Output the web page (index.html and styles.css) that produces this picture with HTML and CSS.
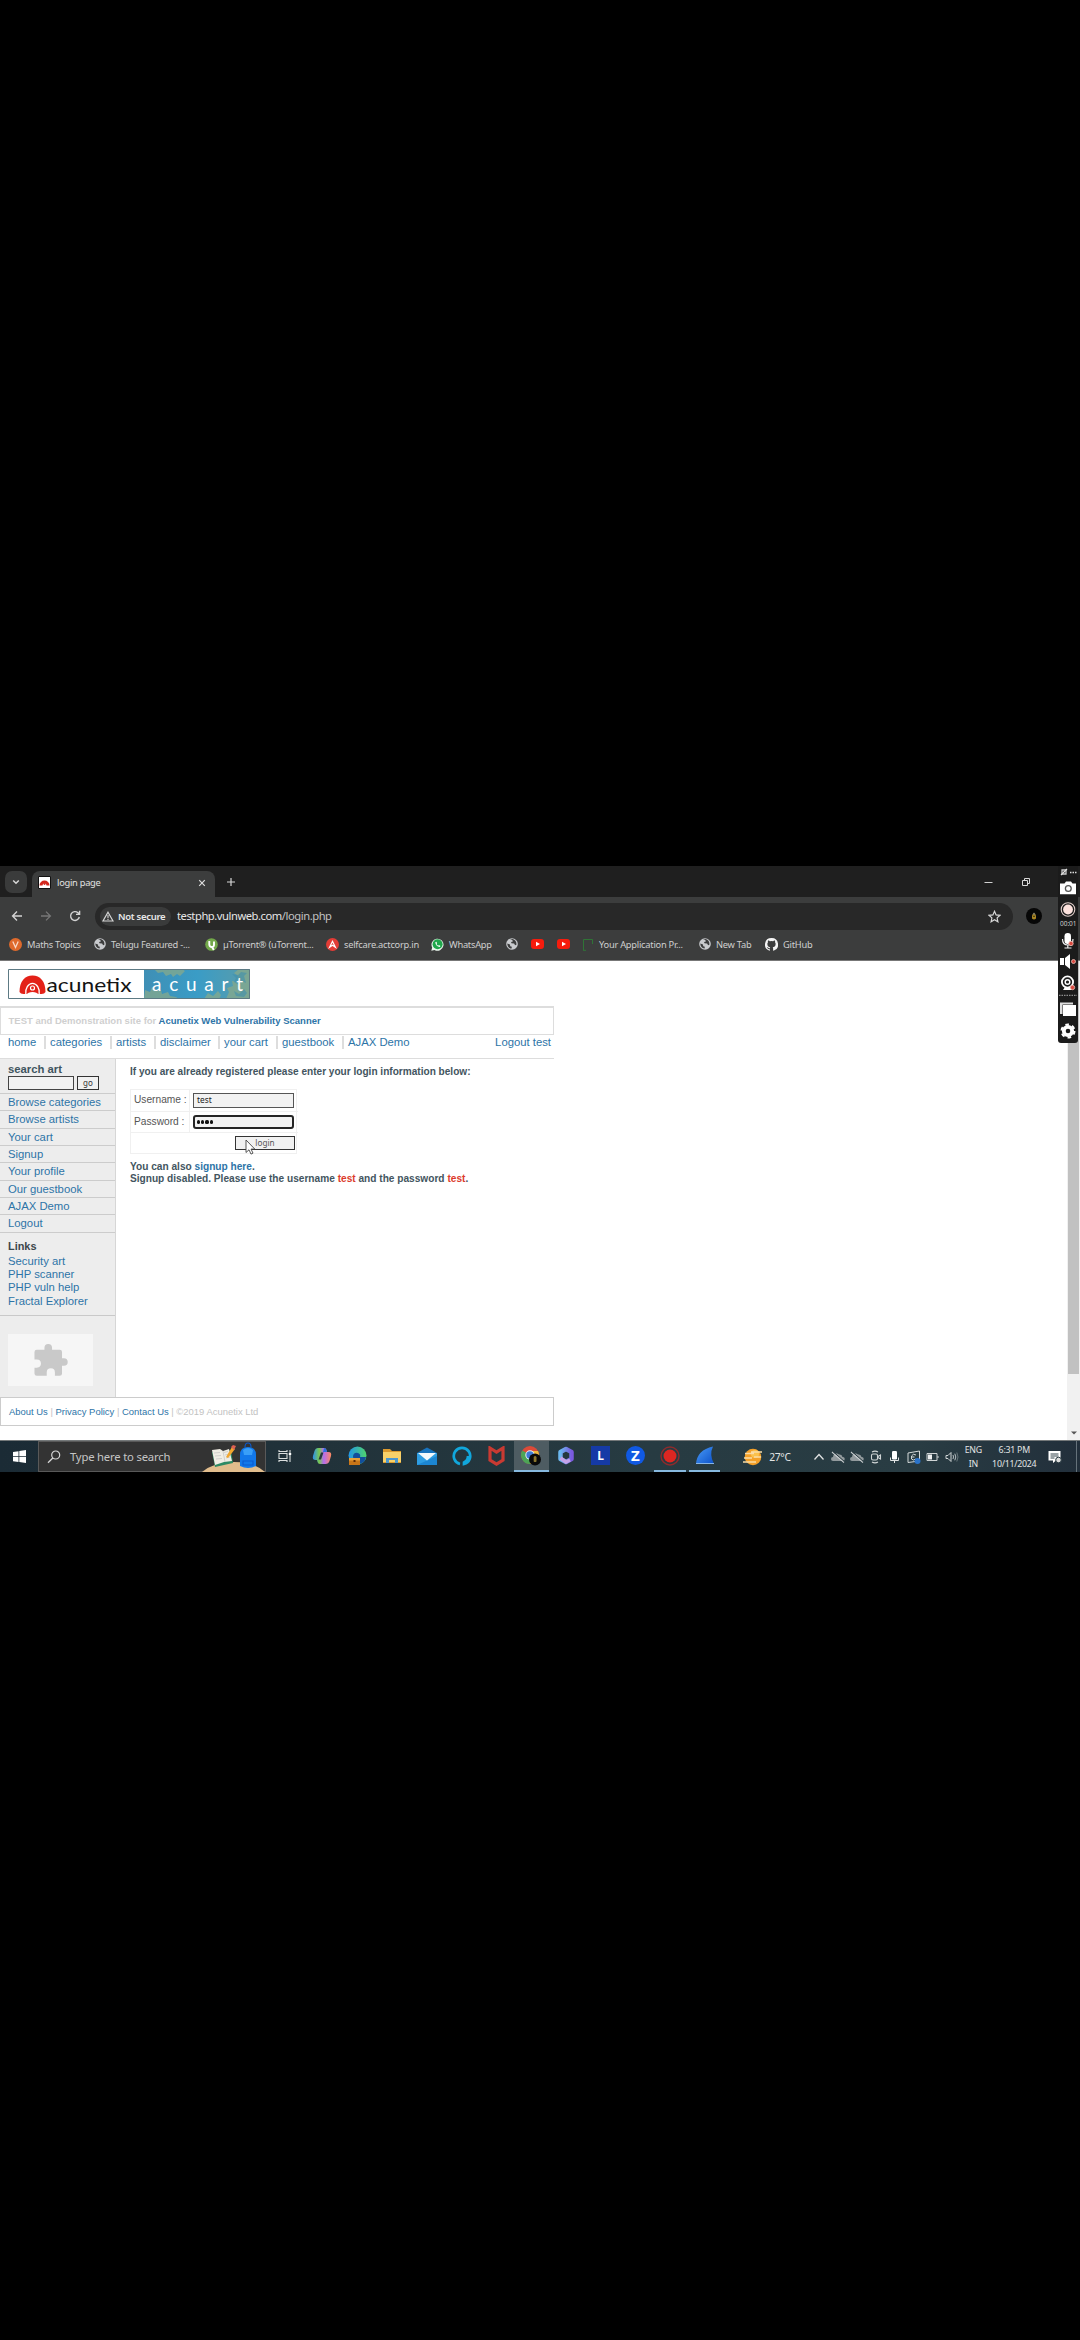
FILE: index.html
```html
<!DOCTYPE html>
<html lang="en">
<head>
<meta charset="utf-8">
<title>login page</title>
<link rel="stylesheet" href="styles.css">
</head>
<body>
<svg width="0" height="0" class="defs">
  <defs>
    <linearGradient id="sky" x1="0" x2="1"><stop offset="0" stop-color="#3f8fb5"/><stop offset=".5" stop-color="#3a9cc6"/><stop offset="1" stop-color="#5a9caa"/></linearGradient>
    <linearGradient id="cop" x1="0" x2="1"><stop offset="0" stop-color="#2b8ff0"/><stop offset=".35" stop-color="#79c94e"/><stop offset=".6" stop-color="#b56cf0"/><stop offset="1" stop-color="#ff8a5c"/></linearGradient>
    <linearGradient id="m365" x1="0" x2="1"><stop offset="0" stop-color="#6bb8f0"/><stop offset="1" stop-color="#7a5ae0"/></linearGradient>
    <linearGradient id="fin" x1="0" x2="1" y2="1"><stop offset="0" stop-color="#4a9cf8"/><stop offset="1" stop-color="#0b50c8"/></linearGradient>
    <linearGradient id="edge" x1="0" x2="1"><stop offset="0" stop-color="#2196e8"/><stop offset="1" stop-color="#4fd46c"/></linearGradient>
    <symbol id="globe" viewBox="0 0 12 12"><circle cx="6" cy="6" r="5.8" fill="#c9cbce"/><path d="M1.3 5.6 4 6.4l.2 1.8 1.6.5-.2 1.8C3.200 10.600 1.300 8.600 1.300 5.600ZM4 1.800l2.300.2.600 1.400-1.800.6.300 1.300 2.700.200 1 1.800 1.300-.600c.400-2.700-1.200-4.900-3.800-5.600Z" fill="#3c3d3d"/></symbol>
    <symbol id="yt" viewBox="0 0 13 10"><rect width="13" height="10" rx="3" fill="#f61c0d"/><path d="M5 2.800v4.400L9 5z" fill="#fff"/></symbol>
    <symbol id="cloudoff" viewBox="0 0 14 12"><path d="M2 10a2 2 0 0 1 0-4 3.500 3.500 0 0 1 6-2.500A3 3 0 0 1 11.500 6 2 2 0 0 1 12 10Z" fill="#929a9d"/><path d="m1 1 12 10.500" stroke="#c9ced0" stroke-width="1.100"/><path d="m2.200.7 11 9.600" stroke="#26383f" stroke-width="1"/></symbol>
  </defs>
</svg>

<main class="desktop">
  <section class="browser">
    <div class="tabstrip">
      <div class="tabsearch"><svg width="10" height="10" viewBox="0 0 10 10"><path d="m2.200 3.500 2.800 2.800 2.800-2.800" fill="none" stroke="#d8d8d8" stroke-width="1.500"/></svg></div>
      <div class="tab">
        <svg width="13" height="13" viewBox="0 0 13 13"><path fill="#fff" stroke="#111" d="M.5.5h12v12H.5z"/><path d="M1.500 9.500a5 5 0 0 1 10 0H8.500a2 2 0 0 0-4 0Z" fill="#d3261c"/><circle cx="6.500" cy="8" r="1" fill="#d3261c"/></svg>
        <span class="t-tab">login page</span>
        <svg class="close" width="8" height="8" viewBox="0 0 8 8"><path d="m1.200 1.200 5.600 5.600m0-5.600L1.200 6.800" stroke="#dedede" stroke-width="1.200"/></svg>
      </div>
      <svg class="plus" width="10" height="10" viewBox="0 0 10 10"><path d="M5 1v8M1 5h8" stroke="#d5d5d5" stroke-width="1.200"/></svg>
      <div class="winbtns">
        <svg width="9" height="9" viewBox="0 0 9 9"><path d="M.5 5.500h8" stroke="#d0d0d0"/></svg>
        <svg width="10" height="10" viewBox="0 0 10 10"><path d="M1.500 3.500h5v5h-5zM3.500 3.300V1.500h5v5H6.700" fill="none" stroke="#d8d8d8"/></svg>
      </div>
    </div>
    <div class="toolbar">
      <div class="navbtns">
        <svg width="12" height="12" viewBox="0 0 12 12"><path d="M11 6H2M6 1.600 1.600 6 6 10.400" fill="none" stroke="#d3d3d3" stroke-width="1.400"/></svg>
        <svg width="12" height="12" viewBox="0 0 12 12"><path d="M1 6h9M6 1.600 10.400 6 6 10.400" fill="none" stroke="#777" stroke-width="1.300"/></svg>
        <svg width="12" height="12" viewBox="0 0 12 12"><path d="M10.300 7A4.400 4.400 0 1 1 9 2.800l1.400 1.400M10.600.8v3.600H7" fill="none" stroke="#d3d3d3" stroke-width="1.400"/></svg>
      </div>
      <div class="omnibox">
        <div class="chip"><svg width="12" height="11" viewBox="0 0 12 11"><path d="M6 1.200 11 10H1Z" fill="none" stroke="#d6d6d6" stroke-width="1.200"/><path d="M6 4v3M6 7.800v1.100" stroke="#d6d6d6" stroke-width="1.100"/></svg><span class="t-chip">Not secure</span></div>
        <span class="t-url">testphp.vulnweb.com<i>/login.php</i></span>
        <svg class="star" width="13" height="13" viewBox="0 0 13 13"><path d="m6.500 1.300 1.600 3.600 3.900.4-2.900 2.600.8 3.900-3.400-2-3.400 2 .8-3.900L1 5.300l3.900-.4Z" fill="none" stroke="#d8d8d8" stroke-width="1.200"/></svg>
      </div>
      <svg class="avatar" width="16" height="16" viewBox="0 0 16 16"><circle cx="8" cy="8" r="8" fill="#070707"/><path d="M6 8a2 2 0 0 1 4 0v2.500q-2 2-4 0Z" fill="#a98522"/><path d="M6.300 6.500 8 4.500l1.700 2Z" fill="#928d75"/><path d="M7 8.300h2" stroke="#373417"/></svg>
    </div>
    <div class="bookmarks">
      <a class="bm b1"><svg width="13" height="13" viewBox="0 0 13 13"><circle cx="6.500" cy="6.500" r="6.500" fill="#df6a2c"/><path d="m3.800 3.500 2.700 6 2.700-6" fill="none" stroke="#f8d9c8" stroke-width="1.300"/></svg><span>Maths Topics</span></a>
      <a class="bm b2"><svg width="12" height="12"><use href="#globe"/></svg><span>Telugu Featured -...</span></a>
      <a class="bm b3"><svg width="13" height="13" viewBox="0 0 13 13"><circle cx="6.500" cy="6.500" r="6.300" fill="#72a84a"/><path d="M4.300 3v3.500q.2 2.500 2.500 2.500t2.200-2.500V3.500M7 9l1.800 3" fill="none" stroke="#fff" stroke-width="1.900"/></svg><span>µTorrent® (uTorrent...</span></a>
      <a class="bm b4"><svg width="13" height="13" viewBox="0 0 13 13"><circle cx="6.500" cy="6.500" r="6.500" fill="#e23c36"/><path d="m3.600 9.300 2.900-6 2.900 6-2.900-2Z" fill="none" stroke="#fff" stroke-width="1.200"/></svg><span>selfcare.actcorp.in</span></a>
      <a class="bm b5"><svg width="13" height="13" viewBox="0 0 13 13"><path d="M.3 12.700 1.200 9.500A6 6 0 1 1 3.500 11.900Z" fill="#e9f6ec"/><circle cx="6.600" cy="6.300" r="5" fill="#1fa74b"/><path d="M4.300 4.200q.3 4 4.600 4.700l.5-1-1.500-.8-.6.600Q6 7 5.500 5.900l.6-.6-.7-1.500Z" fill="#fff"/></svg><span>WhatsApp</span></a>
      <a class="bm b6"><svg width="12" height="12"><use href="#globe"/></svg></a>
      <a class="bm b7"><svg width="13" height="10"><use href="#yt"/></svg></a>
      <a class="bm b8"><svg width="13" height="10"><use href="#yt"/></svg></a>
      <a class="bm b9"><svg width="12" height="13" viewBox="0 0 12 13"><path d="M1.500 12V1.500h9V6M1 12.300h3" fill="none" stroke="#2f7436"/></svg><span>Your Application Pr...</span></a>
      <a class="bm b10"><svg width="12" height="12"><use href="#globe"/></svg><span>New Tab</span></a>
      <a class="bm b11"><svg width="13" height="13" viewBox="0 0 16 16"><path fill="#f4f4f4" d="M8 0a8 8 0 0 0-2.500 15.600c.4.100.5-.2.500-.4v-1.500c-2.200.5-2.700-1-2.700-1-.400-.900-.900-1.200-.900-1.200-.700-.500.1-.5.1-.5.800.100 1.200.800 1.200.800.700 1.200 1.900.900 2.300.700.100-.500.300-.900.500-1.100C4.700 11.200 2.900 10.500 2.900 7.500c0-.900.300-1.600.800-2.200-.100-.2-.400-1 .1-2.100 0 0 .7-.2 2.200.8a7.500 7.500 0 0 1 4 0c1.500-1 2.200-.8 2.200-.8.400 1.100.200 1.900.100 2.100.5.600.8 1.300.8 2.200 0 3-1.900 3.700-3.600 3.900.300.200.5.700.5 1.500v2.300c0 .2.100.5.600.4A8 8 0 0 0 8 0Z"/></svg><span>GitHub</span></a>
    </div>

    <div class="viewport">
      <div class="site">
        <svg class="logo" width="242" height="30" viewBox="0 0 242 30">
          <rect x=".5" y=".5" width="241" height="29" fill="#fff"/>
          <path d="M136 0h106v30H136z" fill="url(#sky)"/>
          <g fill="#86aa8c" opacity=".75"><path d="m136 30 1-9 5 2 2-5 4 4 5-1 1 4 6-2 2 4 6 1 3 2Zm82 0 3-7-2-4 6-2-1-5 5 1 1-6-4-3 5-4h11v30Z"/><path d="m146 0 4 4 5-1 3 4 5-2 2 3 4-3 3 2 5-5-3-2ZM196 30l4-6 5 3 5-5 3 4-2 4Z"/></g>
          <g fill="#3f90ae" opacity=".6"><path d="m224 5 4 4-2 4 5 3 3-4 4 2-2-7 3-3-6-1-3 3ZM226 22l5 3 5-5 3 4-3 4-8-1Z"/></g>
          <path d="M11.500 23C11.500 12 17 6.500 24.500 6.500S37.500 12 37.500 23q-1 2-4 2H15.500q-3 0-4-2Z" fill="#e32118"/>
          <path d="M17.800 25a6.800 9 0 1 1 13.400 0" fill="none" stroke="#fff" stroke-width="1.300"/>
          <circle cx="24.500" cy="19" r="2" fill="none" stroke="#fff" stroke-width="1.200"/>
          <path d="M18.500 25.500q1.500-2.500 6-2.500t6 2.500Z" fill="#fff"/>
          <text x="38.500" y="22.500" textLength="85" lengthAdjust="spacingAndGlyphs" class="lg1">acunetix</text>
          <text x="144" y="22" textLength="91" class="lg2">acuart</text>
          <path d="M.5.500h241v29H.5z" fill="none" stroke="#5d7a84"/>
        </svg>
        <header class="banner"><span class="t-demo">TEST and Demonstration site for</span> <a class="t-scan">Acunetix Web Vulnerability Scanner</a></header>
        <nav class="nav">
          <a class="n1">home</a><a class="n2">categories</a><a class="n3">artists</a><a class="n4">disclaimer</a><a class="n5">your cart</a><a class="n6">guestbook</a><a class="n7">AJAX Demo</a><a class="n8">Logout test</a>
        </nav>
        <div class="cols">
          <aside class="side">
            <div class="search"><b class="t-search">search art</b><div class="srow"><i class="field"></i><i class="go">go</i></div></div>
            <a class="item">Browse categories</a><a class="item">Browse artists</a><a class="item">Your cart</a><a class="item">Signup</a><a class="item">Your profile</a><a class="item">Our guestbook</a><a class="item">AJAX Demo</a><a class="item">Logout</a>
            <div class="links"><b>Links</b><a>Security art</a><a>PHP scanner</a><a>PHP vuln help</a><a>Fractal Explorer</a></div>
            <div class="plugin"><svg width="34" height="34" viewBox="0 0 34 34"><path d="M3 7h8V5a4 4 0 0 1 8 0v2h8q2.500 0 2.500 2.500V16h2a4 4 0 0 1 0 8h-2v8q0 2.500-2.500 2.500h-5V31a4.300 4.300 0 0 0-8.600 0v3.500H3Q.500 34.500.500 32v-6H3a4.300 4.300 0 0 0 0-8.600H.500V9.500Q.500 7 3 7Z" transform="scale(.95)" fill="#c9c9c9"/></svg></div>
          </aside>
          <section class="content">
            <h3>If you are already registered please enter your login information below:</h3>
            <div class="form">
              <label>Username :</label><div class="cell"><i class="inp">test</i></div>
              <label>Password :</label><div class="cell"><i class="inp pw"><em></em><em></em><em></em><em></em></i></div>
              <div class="last"><i class="btn">login</i><svg class="cursor" width="11" height="16" viewBox="0 0 11 16"><path d="M1 1v12.500l3-2.700 2 4.300 2-1-2-4h3.800Z" fill="#fff" stroke="#444" stroke-width=".9"/></svg></div>
            </div>
            <p><span class="t-also">You can also <a>signup here</a>.</span><br><span class="t-dis">Signup disabled. Please use the username <em>test</em> and the password <em>test</em>.</span></p>
          </section>
        </div>
        <footer class="foot"><a>About Us</a> | <a>Privacy Policy</a> | <a>Contact Us</a> | ©2019 Acunetix Ltd</footer>
      </div>
      <div class="scroll"><div class="thumb"></div><svg width="6" height="4" viewBox="0 0 6 4"><path d="M0 .5h6L3 3.500Z" fill="#555"/></svg></div>
    </div>

    <div class="recorder">
      <svg width="20" height="177" viewBox="0 0 20 177">
        <path d="M4 4h4v4H4z" fill="none" stroke="#ccc" stroke-width="1.300"/><path d="m3 9 6-6M12 6.500h1.500m1 0H16m1 0h1.500" stroke="#ddd" stroke-width="1.300"/>
        <path d="M2 17.500h4.500L8 15.500h5l1.500 2H18v10.700H2Z" fill="#fff"/><circle cx="10.300" cy="22.500" r="2.900" fill="#fff" stroke="#555" stroke-width="1.300"/>
        <circle cx="10" cy="43.500" r="6.800" fill="none" stroke="#dfccc8" stroke-width="1.100"/><circle cx="10" cy="43.500" r="4.900" fill="#fde2dd"/>
        <text x="2" y="59.500" textLength="16.500" class="rectime">00:01</text>
        <rect x="6.500" y="67" width="6.500" height="11" rx="3.200" fill="#fff"/><path d="M4.500 73q0 6 5.300 6t5.200-6M9.800 79v3M6.500 82h7" fill="none" stroke="#eee" stroke-width="1.200"/>
        <path d="M2 92h4v7H2zm5 0 5-4v15l-5-4Z" fill="#fff"/>
        <circle cx="9.500" cy="116" r="5.600" fill="none" stroke="#fff" stroke-width="1.800"/><circle cx="9.500" cy="116" r="2.300" fill="none" stroke="#fff" stroke-width="1.500"/><path d="m7 121-2 3h9l-2-3Z" fill="#fff"/>
        <g fill="#d9483f" stroke="#eec1b9" stroke-width=".8"><circle cx="13" cy="77.500" r="2.200"/><circle cx="15.500" cy="95.500" r="2"/><circle cx="14.500" cy="121.500" r="2.200"/></g>
        <path d="M1 129.300h18" stroke="#aaa" stroke-dasharray="1.500 1"/>
        <path d="M2 136.500h13v2H4.500V148H2z" fill="#ddd"/><path d="M5 139h13v11H5z" fill="#fff"/>
        <circle cx="10" cy="165" r="4.200" fill="none" stroke="#fff" stroke-width="3.800"/><circle cx="10" cy="165" r="6.500" fill="none" stroke="#fff" stroke-width="2" stroke-dasharray="3.600 3.200"/>
      </svg>
    </div>
  </section>

  <section class="taskbar">
    <div class="start"><svg width="13" height="13" viewBox="0 0 13 13"><path d="M0 2l5.500-.8v5H0Zm6.300-1L13 0v6.200H6.300ZM0 7h5.500v5L0 11.200Zm6.300 0H13v6l-6.700-.9Z" fill="#fff"/></svg></div>
    <div class="tsearch">
      <svg width="14" height="14" viewBox="0 0 14 14"><circle cx="8.700" cy="5" r="4" fill="none" stroke="#d6d6d6" stroke-width="1.200"/><path d="M5.800 8 1 12.800" stroke="#d6d6d6" stroke-width="1.300"/></svg>
      <span class="t-type">Type here to search</span>
      <svg class="school" width="63" height="30" viewBox="0 0 63 30"><path d="M0 30Q12 20 32 20t31 10Z" fill="#e1bd8d"/><path d="m10 10 9-1 4 .5 6-1.500 2 13-18 4Z" fill="#2d8a63"/><path d="m10 8 8-1 3 2 6-2 3 12-8 1-9 3Z" fill="#f0ede4"/><path d="m12 11 6-.5m4 0 4-1M13 14l6-.5m4-.5 4-1M14 17l6-.5m4-.5 4-1M21 9l2 11" stroke="#bbb" stroke-width=".6"/><path d="m24 15 6-10 3 2-7 9Z" fill="#f2a62d"/><path d="m29 5 2-2 3 1-2 4Z" fill="#dd6152"/><path d="M38 24V13q0-8 8-8t8 8v11q-8 4-16 0Z" fill="#1278ea"/><path d="M43 5q0-4 3-4t3 4M41 19h10v4H41Z" stroke="#0a5ad0" fill="none" stroke-width="1.100"/><path d="M41 8q5-4 10 0l-1 5h-8Z" fill="#399ff8"/></svg>
    </div>
    <div class="apps">
      <div class="app tv"><svg width="14" height="14" viewBox="0 0 14 14"><path d="M1 1v1.500h8V1M1 13v-1.500h8V13M1 4.500h8v5H1zM12 1v12" fill="none" stroke="#d9dddd" stroke-width="1.100"/><path d="M10.800 4h2.400v2h-2.400z" fill="#fff"/></svg></div>
      <div class="app cp"><svg width="20" height="18" viewBox="0 0 20 18"><path d="M6 1h6q2 0 2.500 2l.5 2h1.500q3.500 0 2.500 4l-1.500 5q-1 3-4 3H8q-2 0-2.500-2L5 13H3.500Q0 13 1 9l1.500-5q1-3 3.500-3Z" fill="url(#cop)"/><path d="M11.500 5.500 9 12.500H6.500L9 5.500Z" fill="#26383f"/><path d="M12 1q2 0 2.500 2l.5 2h-4Z" fill="#2b6fe0"/></svg></div>
      <div class="app"><svg width="20" height="20" viewBox="0 0 20 20"><circle cx="10.500" cy="9.500" r="9" fill="url(#edge)"/><path d="M6 10q1-4 5-3 3 1 2 4h6q-1 7-8 7-5-2-5-8Z" fill="#124f9c"/><path d="M2 12h11v7H2z" fill="#c97618"/><path d="M2 12h11v2.500H2z" fill="#e6a13a"/><path d="M6.500 14h2v2h-2z" fill="#5c2b08"/></svg></div>
      <div class="app"><svg width="18" height="16" viewBox="0 0 18 16"><path d="M0 1h7l2 2h9v12H0Z" fill="#dc9a2e"/><path d="M0 4h18v10H0Z" fill="#f8d169"/><path d="M3 15v-5h12v5h-3v-3H6v3Z" fill="#4c97cf"/></svg></div>
      <div class="app"><svg width="20" height="18" viewBox="0 0 20 18"><path d="m0 6 10-5.500L20 6v12H0Z" fill="#1873bd"/><path d="M0 6h20v12H0Z" fill="#2e9de2"/><path d="m0 18 20-9v9Z" fill="#1c86d2"/><path d="M1 6h18l-9 7.500Z" fill="#f3f9fc"/></svg></div>
      <div class="app"><svg width="20" height="20" viewBox="0 0 20 20"><path d="M8 18a8.200 8.200 0 1 1 4 0v-1.500q4-2 4-6.500" fill="none" stroke="#11a7dc" stroke-width="2.700"/></svg></div>
      <div class="app"><svg width="17" height="20" viewBox="0 0 17 20"><path d="m2 2 6.500 4L15 2v12l-6.500 4L2 14Z" fill="none" stroke="#c93a32" stroke-width="3.200"/></svg></div>
      <div class="app active"><svg width="22" height="21" viewBox="0 0 22 21"><circle cx="10" cy="10" r="9" fill="#dc4a38"/><path d="M2.200 5.500A9 9 0 0 0 10 19l4-7Z" fill="#4da557"/><path d="M10 19a9 9 0 0 0 8-13h-8Z" fill="#edb93b"/><circle cx="10" cy="10" r="4.700" fill="#e9f0f8"/><circle cx="10" cy="10" r="3.700" fill="#3e79d4"/><circle cx="15" cy="14.500" r="6" fill="#090909"/><path d="M13.700 12q1.400-2 2.800 0v4.500q-1.400 1-2.800 0Z" fill="#8a752d"/></svg></div>
      <div class="app"><svg width="18" height="19" viewBox="0 0 18 19"><path d="M9 3 14.500 6v7L9 16l-5.500-3V6Z" fill="none" stroke="url(#m365)" stroke-width="4.500" stroke-linejoin="round"/><path d="M3.500 12 9 16l4-2" stroke="#c5a2e8" stroke-width="3.500" fill="none"/></svg></div>
      <div class="app"><span class="sq">L</span></div>
      <div class="app"><span class="sq zed">Z</span></div>
      <div class="app run"><svg width="20" height="20" viewBox="0 0 20 20"><circle cx="10" cy="10" r="9" fill="none" stroke="#8e2b2c" stroke-width="1.400"/><circle cx="10" cy="10" r="6.500" fill="#dc2722"/></svg></div>
      <div class="app run"><svg width="19" height="19" viewBox="0 0 19 19"><path d="M1 18Q2 4 18 .5q-4 8 1 17.500Z" fill="url(#fin)"/><path d="M1 17.500h18" stroke="#86b5e5"/></svg></div>
    </div>
    <div class="weather"><svg width="20" height="18" viewBox="0 0 20 18"><circle cx="10" cy="9" r="8.300" fill="#f4a028"/><circle cx="12" cy="6" r="4" fill="#fbc14c"/><path d="M2 5.500h9M8 4h11M1 10h8M11 9h7M0 14h13" stroke="#fadba4" stroke-width="1.300"/></svg><span class="t-temp">27°C</span></div>
    <div class="tray">
      <svg width="12" height="12" viewBox="0 0 12 12"><path d="m1.500 8.500 4.500-5 4.500 5" fill="none" stroke="#e0e2e2" stroke-width="1.300"/></svg>
      <svg width="14" height="12"><use href="#cloudoff"/></svg>
      <svg width="14" height="12"><use href="#cloudoff"/></svg>
      <svg width="12" height="14" viewBox="0 0 12 14"><rect x="1.500" y="4" width="6" height="6" rx="1.500" fill="none" stroke="#d0d5d6" stroke-width="1.100"/><path d="m8 6.500 2.500-1.500v4L8 7.500M2 2q3-1.800 6 0M2 12q3 1.800 6 0" fill="none" stroke="#d0d5d6" stroke-width="1.100"/></svg>
      <svg width="11" height="14" viewBox="0 0 11 14"><rect x="3" y="1" width="5" height="8.500" rx="1.200" fill="#fff"/><path d="M1.500 7.500v3h8v-3M5.500 10.500V13" fill="none" stroke="#dfe2e2"/></svg>
      <svg width="14" height="14" viewBox="0 0 14 14"><path d="m1 3 11.500-2v10L1 12.500Z" fill="none" stroke="#d3d8d9"/><path d="M9 5Q6 3 4.500 6v3q2 2 4 0M4.500 7h3" fill="none" stroke="#d3d8d9"/><circle cx="10.500" cy="11" r="3" fill="#2b73c9"/></svg>
      <svg width="13" height="10" viewBox="0 0 13 10"><path d="M1 1.500h10v7H1zM12 4v2" fill="none" stroke="#cfd4d5"/><path d="M2 2.500h4v5H2z" fill="#eef0f0"/></svg>
      <svg width="14" height="12" viewBox="0 0 14 12"><path d="M1 4.500h2l3-3v9l-3-3H1Z" fill="none" stroke="#cfd4d5"/><path d="M8 4q1 2 0 4M9.800 2.700q2 3.300 0 6.600" fill="none" stroke="#b9c0c2"/><path d="M11.800 1.500q2.400 4.500 0 9" fill="none" stroke="#68767b"/></svg>
    </div>
    <div class="lang"><span>ENG</span><span>IN</span></div>
    <div class="clock"><span class="t-time">6:31 PM</span><span class="t-date">10/11/2024</span></div>
    <svg class="notif" width="14" height="14" viewBox="0 0 14 14"><path d="M.5 1h12v9.500H8L5 13v-2.500H.5Z" fill="#fff"/><path d="M2.500 4h8M2.500 6h8M2.500 8h4" stroke="#34454c"/><circle cx="10.500" cy="10" r="2.800" fill="#ddd" stroke="#26383f"/></svg>
    <div class="peek"></div>
  </section>
</main>
</body>
</html>
```
FILE: styles.css
```css
* { box-sizing: border-box; }
html, body { margin: 0; background: #000; }
body { width: 1080px; height: 2340px; overflow: hidden; font-family: "Liberation Sans", Arial, sans-serif; }
i, em { font-style: normal; }
svg { display: block; flex: none; }
span, a, b, label, h3 { white-space: nowrap; }
.defs { position: absolute; }
.desktop { padding-top: 866px; }
.browser { position: relative; height: 574px; font-family: "Noto Sans", sans-serif; }

.tabstrip { display: flex; height: 31px; background: #1f1f1f; padding: 5px 0 0 5px; }
.tabsearch { width: 22px; height: 22px; border-radius: 7px; background: #3a3b3b; display: grid; place-items: center; }
.tab { margin-left: 5px; width: 183px; height: 26px; background: #3c3d3d; border-radius: 8px 8px 0 0; display: flex; align-items: center; padding: 0 9px 3px 6px; }
.t-tab { margin-left: 6px; font-size: 9.300px; letter-spacing: -.27px; color: #e2e2e2; }
.close { margin-left: auto; }
.plus { margin: 6px 0 0 11px; }
.winbtns { margin-left: auto; display: flex; width: 96px; gap: 27.500px; padding-top: 6px; }

.toolbar { display: flex; align-items: center; height: 37px; background: #3c3d3d; }
.navbtns { display: flex; gap: 17px; padding-left: 11px; width: 95px; }
.omnibox { display: flex; align-items: center; width: 918px; height: 27px; border-radius: 14px; background: #282828; padding: 0 12px 0 5px; margin-top: 1px; }
.chip { display: flex; align-items: center; gap: 4px; width: 71px; height: 19px; border-radius: 10px; background: #3a3b3b; padding-left: 2px; }
.t-chip { font-size: 9.500px; font-weight: 600; letter-spacing: -.3px; color: #e8e8e8; }
.t-url { margin-left: 6px; padding-bottom: 1px; font-size: 11.200px; letter-spacing: -.45px; color: #e6e6e6; }
.t-url i { color: #c2c2c2; }
.star { margin-left: auto; }
.avatar { margin-left: 13px; }

.bookmarks { display: flex; height: 27px; background: #3c3d3d; border-bottom: 1px solid #777; padding: 0 0 6px 9px; font-size: 9.300px; letter-spacing: -.25px; color: #cfcfcf; }
.bm { display: flex; align-items: center; gap: 5px; }
.b1 { width: 85px; } .b2 { width: 111px; } .b3 { width: 121px; } .b4 { width: 105px; } .b5 { width: 75px; }
.b6 { width: 25px; } .b7 { width: 26px; } .b8 { width: 25px; } .b9 { width: 117px; } .b10 { width: 66px; }

.viewport { display: flex; height: 479px; background: #fff; font-family: "Liberation Sans", Arial, sans-serif; }
.site { width: 554px; }
.logo { margin: 8px 0 7px 8px; }
.lg1 { font: 20px "Lato", sans-serif; fill: #141414; }
.lg2 { font: 19px "Lato", sans-serif; fill: #fff; }
.banner { height: 29px; border: 1px solid #ddd; border-width: 2px 1px 1px 1px; padding-left: 7.500px; font-size: 9.500px; line-height: 26px; font-weight: bold; color: #cfcfcf; white-space: nowrap; }
a { color: #2d74a7; }
.bm { color: inherit; }
.nav { display: flex; height: 24px; border-bottom: 1px solid #ddd; padding: 1px 3px 0 8px; font-size: 11.300px; line-height: 13px; }
.nav a { height: 13px; border-right: 2px solid #ddd; margin-right: 4px; }
.nav .n7 { border: 0; }
.nav .n8 { border: 0; margin: 0 0 0 auto; }
.n1 { width: 38px; } .n2 { width: 62px; } .n3 { width: 40px; } .n4 { width: 60px; } .n5 { width: 54px; } .n6 { width: 62px; }
.cols { display: flex; height: 338px; }
.side { width: 116px; background: #ededed; border-right: 1px solid #d6d6d6; }
.search { height: 35px; border-bottom: 1px solid #ccc; padding: 4px 0 0 8px; }
.t-search { display: block; font-size: 11.300px; line-height: 13px; color: #405560; }
.srow { display: flex; gap: 3px; }
.field { width: 66px; height: 14px; background: #f2f2f2; border: 1.500px solid #444; }
.go { width: 22px; height: 14px; border: 1.500px solid #333; background: #f1f1f1; font: 8px/12px "Noto Sans", sans-serif; text-align: center; color: #333; }
.item { display: block; height: 17.350px; border-bottom: 1px solid #ccc; padding-left: 8px; font-size: 11.300px; line-height: 17.500px; }
.links { height: 83px; border-bottom: 1px solid #c9c9c9; padding: 6px 0 0 8px; font-size: 11.300px; line-height: 13.300px; }
.links b, .links a { display: block; }
.links b { color: #3c464b; line-height: 15px; margin-bottom: 1px; font-size: 10.900px; }
.plugin { width: 85px; height: 52px; margin: 18px 0 0 8px; background: #f6f6f6; display: grid; place-items: center; }
.content { padding: 5px 0 0 14px; color: #435560; }
h3 { margin: 0 0 10px; font-size: 10.080px; line-height: 15px; }
.form { display: grid; grid-template-columns: 59px 108px; grid-template-rows: 22px 21px 20px; width: 167px; height: 65px; border: 1px solid #f0f0f0; color: #555; position: relative; }
label { padding-left: 3px; font-size: 10.200px; line-height: 20px; border-right: 1px solid #f0f0f0; border-bottom: 1px solid #f0f0f0; }
.cell { padding: 3px 0 0 3px; border-bottom: 1px solid #f0f0f0; }
.inp { display: flex; width: 101px; height: 15px; border: 1.500px solid #555; background: #f2f2f2; font: 8.300px/12px "Noto Sans", sans-serif; color: #222; padding-left: 3px; }
.pw { border: 2px solid #252525; border-radius: 3px; align-items: center; gap: 1px; padding-left: 2px; height: 14px; }
.pw em { width: 3.200px; height: 3.200px; border-radius: 50%; background: #111; }
.last { grid-column: 1 / 3; position: relative; padding: 3px 0 0 104px; }
.btn { display: block; width: 60px; height: 14px; border: 1.500px solid #333; background: #f1f1f1; font: 8.200px/11px "Noto Sans", sans-serif; text-align: center; color: #555; }
.cursor { position: absolute; left: 114px; top: 6px; }
p { margin: 7px 0 0; font-weight: bold; font-size: 10.130px; line-height: 12px; }
p em { color: #dc3b2d; }
.foot { height: 29px; border: 1px solid #ccc; padding-left: 8px; font-size: 9.450px; line-height: 27px; color: #c2c2c2; white-space: nowrap; }
.scroll { margin-left: auto; width: 13px; background: #f1f1f1; display: flex; flex-direction: column; align-items: center; }
.thumb { width: 11px; height: 413px; background: #c1c1c1; }
.scroll svg { margin-top: 57px; }
.recorder { position: absolute; left: 1058px; top: 0; width: 20px; height: 177px; background: #1b1b1b; border-radius: 0 0 3px 3px; }
.rectime { font: 6.500px "Noto Sans", sans-serif; fill: #ccc; }

.taskbar { display: flex; align-items: center; height: 32px; background: linear-gradient(90deg, #1b2b35 0, #21323a 30%, #273b42 60%, #293c43 85%, #222f3b); border-top: 1px solid #75797a; font-family: "Noto Sans", sans-serif; color: #e3e5e5; }
.start { width: 38px; display: grid; place-items: center; }
.tsearch { width: 228px; height: 31px; background: #333; border: 1px solid #595959; display: flex; align-items: center; padding-left: 8px; }
.t-type { margin-left: 9px; font-size: 11.300px; letter-spacing: -.2px; color: #c5c5c5; }
.school { margin-left: auto; }
.apps { display: flex; height: 31px; }
.app { width: 34.750px; display: grid; place-items: center; border-bottom: 2px solid transparent; }
.tv { width: 37px; } .cp { width: 37px; }
.active { background: #4e5c62; border-color: #87b9df; }
.run { border-image: linear-gradient(90deg, transparent 3px, #87b9df 3px, #87b9df 31px, transparent 31px) 2; border-width: 0 0 2px; border-style: solid; }
.sq { width: 19px; height: 19px; background: #153aa6; font: bold 12px/19px "Noto Sans", sans-serif; text-align: center; color: #fff; }
.zed { border-radius: 50%; background: #1059e3; font-size: 15px; }
.weather { display: flex; align-items: center; gap: 6px; margin-left: 21px; width: 66px; }
.t-temp { font-size: 10.300px; letter-spacing: -.35px; }
.tray { display: grid; grid-template-columns: repeat(8, 19px); place-items: center; }
.lang, .clock { display: grid; justify-items: center; font-size: 8.800px; line-height: 14px; letter-spacing: -.25px; }
.lang { width: 28px; margin-left: -2px; }
.clock { width: 52px; margin-left: 1px; }
.notif { margin-left: 8px; }
.peek { margin-left: auto; width: 4px; height: 31px; border-left: 1px solid #65727a; }
```
